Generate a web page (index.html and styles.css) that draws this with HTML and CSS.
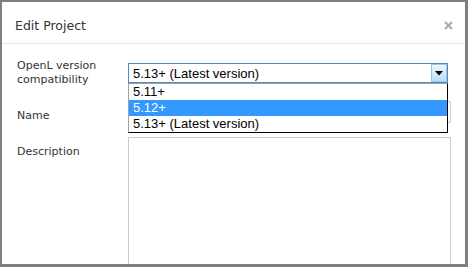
FILE: index.html
```html
<!DOCTYPE html>
<html lang="en">
<head>
    <meta charset="UTF-8">
    <title>Edit Project</title>
    <link rel="stylesheet" href="styles.css">
</head>
<body>

<div class="modal">
    <div class="modal-header">
        <h3>Edit Project</h3>
        <span class="close">
            <svg width="9" height="9" viewBox="0 0 9 9"><path d="M1 1 L8 8 M8 1 L1 8" stroke="#a8a8a8" stroke-width="2"/></svg>
        </span>
    </div>
    <div class="modal-body">
        <div class="form">
            <label class="label first">OpenL version compatibility</label>
            <div class="field">
                <div class="select">
                    <span class="select-value">5.13+ (Latest version)</span>
                    <span class="select-btn">
                        <svg width="8" height="5" viewBox="0 0 8 5"><path d="M0 0 H8 L4 4.5 Z" fill="#000"/></svg>
                    </span>
                    <!-- open list -->
                    <ul class="options">
                        <li>5.11+</li>
                        <li class="selected">5.12+</li>
                        <li>5.13+ (Latest version)</li>
                    </ul>
                </div>
            </div>

            <label class="label" for="projectName">Name</label>
            <input type="text" id="projectName" class="input">

            <label class="label" for="projectDesc">Description</label>
            <textarea id="projectDesc" class="textarea"></textarea>
        </div>
    </div>
</div>

</body>
</html>
```

FILE: styles.css
```css
body {
    margin: 0;
    padding: 0;
    font-family: 'DejaVu Sans', Verdana, sans-serif;
    background-color: #fff;
}
.modal {
    width: 468px;
    height: 267px;
    box-sizing: border-box;
    border: 2px solid #7f7f7f;
    border-right-width: 3px;
    border-bottom-width: 3px;
    background-color: #fff;
    overflow: hidden;
}
.modal-header {
    display: flex;
    justify-content: space-between;
    align-items: center;
    height: 42px;
    box-sizing: border-box;
    padding: 6px 12px 0 13px;
    border-bottom: 1px solid #e5e5e5;
}
.modal-header h3 {
    margin: 0;
    font-size: 12.5px;
    font-weight: normal;
    color: #333;
    line-height: 18px;
}
.close {
    display: flex;
}
.modal-body {
    padding: 14px 0 0 15px;
}
.form {
    display: grid;
    grid-template-columns: 111px 323px;
    grid-template-rows: 29px 22px 150px;
    row-gap: 14px;
}
.label {
    font-size: 11px;
    line-height: 14px;
    color: #333;
    padding-top: 8px;
}
.label.first {
    padding-top: 1px;
    padding-right: 20px;
}
.field {
    padding-top: 5px;
}
.select {
    position: relative;
    width: 320px;
    height: 20px;
    box-sizing: border-box;
    border: 1px solid #4f8cc4;
    display: flex;
    justify-content: space-between;
    font-family: 'Liberation Sans', Arial, sans-serif;
    font-size: 13px;
    color: #000;
}
.select-value {
    padding-left: 4px;
    line-height: 19px;
}
.select-btn {
    width: 16px;
    height: 18px;
    box-sizing: border-box;
    border: 1px solid #9cc7e6;
    background: linear-gradient(#eef7fd, #bcdcf2);
    display: flex;
    align-items: center;
    justify-content: center;
}
.options {
    position: absolute;
    top: 19px;
    left: -1px;
    width: 320px;
    box-sizing: border-box;
    margin: 0;
    padding: 0;
    list-style: none;
    background-color: #fff;
    border: 1px solid #000;
    border-left-color: #a0a0a0;
    border-top-color: #a0a0a0;
}
.options li {
    height: 16px;
    line-height: 16px;
    padding-left: 4px;
}
.options li.selected {
    background-color: #3399ff;
    color: #fff;
}
.input, .textarea {
    margin: 0;
    padding: 0;
    box-sizing: border-box;
    width: 323px;
    border: 1px solid #ccc;
    background-color: #fff;
    font-size: 12px;
}
.input {
    height: 22px;
}
.textarea {
    height: 150px;
    resize: none;
}
```
